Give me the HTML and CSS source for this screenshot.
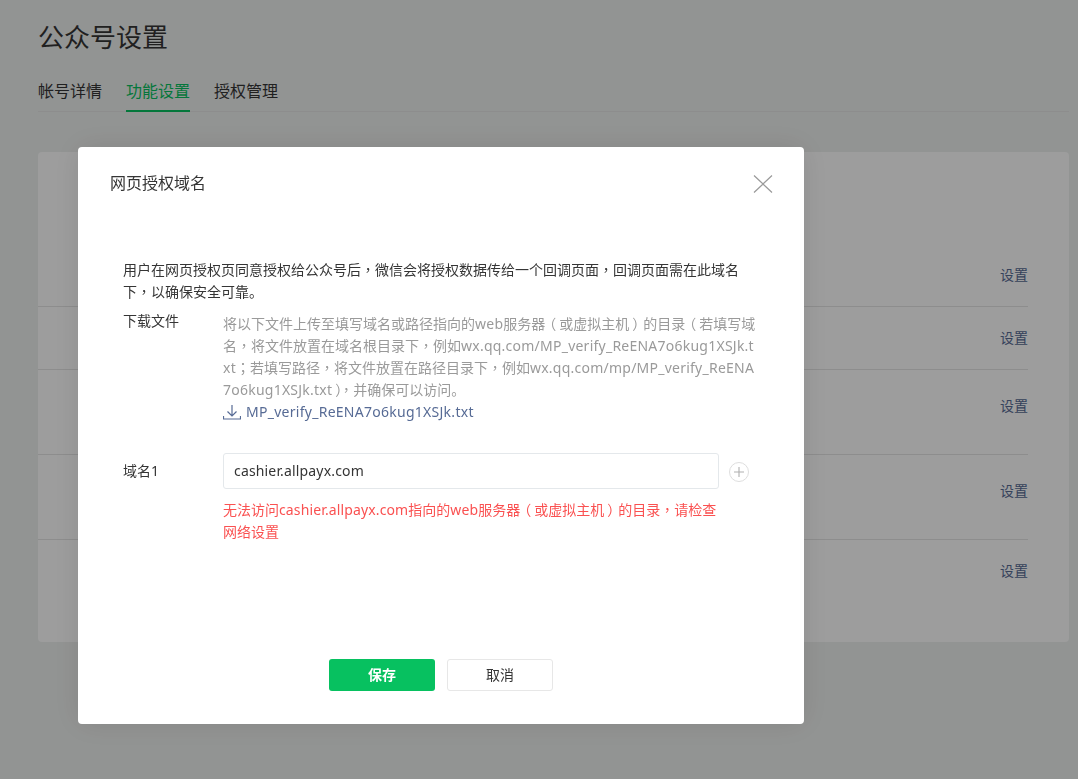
FILE: index.html
```html
<!DOCTYPE html>
<html lang="zh-CN">
<head>
<meta charset="utf-8">
<title>公众号设置</title>
<link rel="stylesheet" href="styles.css">
</head>
<body>
<main class="page">
  <h1 class="page-title">公众号设置</h1>
  <nav class="tabs">
    <a class="tab">帐号详情</a>
    <a class="tab tab-active">功能设置</a>
    <a class="tab">授权管理</a>
  </nav>
  <section class="card">
    <div class="row row-1"><a class="row-link">设置</a></div>
    <div class="row row-2"><a class="row-link">设置</a></div>
    <div class="row row-3"><a class="row-link">设置</a></div>
    <div class="row row-4"><a class="row-link">设置</a></div>
    <div class="row row-5"><a class="row-link">设置</a></div>
  </section>
</main>
<div class="overlay">
  <div class="dialog">
    <header class="dialog-head">
      <h2 class="dialog-title">网页授权域名</h2>
      <svg class="close" width="20" height="20" viewBox="0 0 20 20" fill="none" stroke="#9a9a9a" stroke-width="1.2"><path d="M1 1.5 19 18.5M19 1.5 1 18.5"/></svg>
    </header>
    <div class="dialog-body">
      <p class="intro">用户在网页授权页同意授权给公众号后<span class="p" lang="zh-TW">，</span>微信会将授权数据传给一个回调页面<span class="p" lang="zh-TW">，</span>回调页面需在此域名<br>下<span class="p" lang="zh-TW">，</span>以确保安全可靠。</p>
      <div class="field field-file">
        <div class="label">下载文件</div>
        <div class="value">
          <p class="hint">将以下文件上传至填写域名或路径指向的<span class="en">web</span>服务<span class="tight">器</span><span class="p po" lang="zh-TW">（</span>或虚拟主机<span class="p pc" lang="zh-TW">）</span>的目<span class="tight">录</span><span class="p po" lang="zh-TW">（</span>若填写域<br>名<span class="p" lang="zh-TW">，</span>将文件放置在域名根目录下<span class="p" lang="zh-TW">，</span>例如<span class="en">wx.qq.com/MP_verify_ReENA7o6kug1XSJk.t</span><br><span class="en">xt</span><span class="p" lang="zh-TW">；</span>若填写路径<span class="p" lang="zh-TW">，</span>将文件放置在路径目录下<span class="p" lang="zh-TW">，</span>例如<span class="en">wx.qq.com/mp/MP_verify_ReENA</span><br><span class="en">7o6kug1XSJk.txt</span><span class="p pc" lang="zh-TW">）</span><span class="p" lang="zh-TW">，</span>并确保可以访问。</p>
          <a class="download">
            <svg width="18" height="16" viewBox="0 0 18 16" fill="none" stroke="#576b95" stroke-width="1.2"><path d="M9 1v10.5M4.5 7.5 9 12l4.500-4.500M.5 12v3h17v-3"/></svg>
            <span class="en en-link">MP_verify_ReENA7o6kug1XSJk.txt</span>
          </a>
        </div>
      </div>
      <div class="field field-domain">
        <div class="label label-domain">域名1</div>
        <div class="value">
          <div class="input-line">
            <div class="input">cashier.allpayx.com</div>
            <svg class="plus" width="20" height="20" viewBox="0 0 20 20" fill="none"><circle cx="10" cy="10" r="9.500" stroke="#dedede"/><path d="M10 5v10M5 10h10" stroke="#b0b0b0" stroke-width="1.100"/></svg>
          </div>
          <p class="error">无法访问<span class="en en-error">cashier.allpayx.com</span>指向的<span class="en en-error">web</span>服务<span class="tight">器</span><span class="p po" lang="zh-TW">（</span>或虚拟主机<span class="p pc" lang="zh-TW">）</span>的目录<span class="p" lang="zh-TW">，</span>请检查<br>网络设置</p>
        </div>
      </div>
    </div>
    <footer class="dialog-foot">
      <button class="btn btn-primary">保存</button>
      <button class="btn btn-default">取消</button>
    </footer>
  </div>
</div>
</body>
</html>
```
FILE: styles.css
```css
* { box-sizing: border-box; }
html, body { margin: 0; height: 100%; overflow: hidden; }
body {
  background: #eef0ef;
  color: #353535;
  font-family: "Noto Sans", "Noto Sans CJK SC", sans-serif;
  font-size: 14px;
}
.p { font-family: "Noto Sans CJK TC", sans-serif; line-height: 1; }
.tight { letter-spacing: -3px; }
.po { margin-right: 3px; }
.pc { margin-left: 3px; letter-spacing: -3px; }
.en { letter-spacing: .24px; }
.en-link { letter-spacing: .27px; }
.en-error { letter-spacing: .13px; }
.page { padding: 0 9px 0 38px; }
.page-title {
  margin: 0;
  padding-top: 18px;
  font-size: 26px;
  line-height: 38px;
  font-weight: 400;
}
.tabs {
  display: flex;
  gap: 24px;
  margin-top: 16px;
  border-bottom: 1px solid #e5e5e5;
  height: 40px;
}
.tab {
  font-size: 16px;
  line-height: 36px;
  height: 40px;
  padding-top: 1px;
  border-bottom: 2px solid transparent;
}
.tab-active { color: #07c160; border-bottom-color: #07c160; }
.card {
  margin-top: 40px;
  height: 490px;
  background: #fff;
  border-radius: 4px;
  padding: 0 41px 0 0;
}
.row {
  display: flex;
  justify-content: flex-end;
  align-items: center;
  border-bottom: 1px solid #e5e5e5;
  padding-bottom: 2px;
}
.row:last-child { border-bottom: 0; }
.row-1 { height: 155px; padding-top: 92px; }
.row-2 { height: 63px; }
.row-3 { height: 85px; padding-bottom: 14px; }
.row-4 { height: 85px; padding-bottom: 14px; }
.row-5 { height: 62px; }
.row-link { color: #576b95; font-size: 14px; }
.overlay {
  position: fixed;
  inset: 0;
  background: rgba(0, 0, 0, .385);
}
.dialog {
  position: absolute;
  left: 78px;
  top: 147px;
  width: 726px;
  height: 577px;
  background: #fff;
  border-radius: 4px;
  box-shadow: 0 0 30px rgba(0, 0, 0, .1);
  display: flex;
  flex-direction: column;
}
.dialog-head {
  display: flex;
  justify-content: space-between;
  align-items: flex-start;
  padding: 27px 31px 0 32px;
}
.dialog-title {
  margin: 0;
  font-size: 16px;
  line-height: 18px;
  font-weight: 400;
}
.close { display: block; }
.dialog-body { padding: 65px 45px 0; flex: 1; }
.intro {
  margin: 0;
  line-height: 22px;
  white-space: nowrap;
}
.field { display: flex; }
.field-file { margin-top: 7px; }
.field-domain { margin-top: 30px; }
.label { width: 100px; line-height: 22px; flex: none; }
.label-domain { line-height: 36px; }
.value { flex: 1; min-width: 0; }
.hint {
  margin: 3px 0 0;
  color: #9a9a9a;
  line-height: 22px;
  white-space: nowrap;
}
.download {
  display: flex;
  align-items: center;
  gap: 5px;
  color: #576b95;
  line-height: 22px;
}
.input-line { display: flex; align-items: center; gap: 10px; }
.input {
  width: 496px;
  height: 36px;
  border: 1px solid #e4e8eb;
  border-radius: 3px;
  padding: 0 10px;
  line-height: 34px;
  letter-spacing: .16px;
  color: #353535;
}
.plus { display: block; margin-top: 2px; }
.error {
  margin: 10px 0 0;
  color: #fa5151;
  line-height: 22px;
  white-space: nowrap;
}
.dialog-foot {
  display: flex;
  justify-content: center;
  gap: 12px;
  padding-bottom: 33px;
}
.btn {
  width: 106px;
  height: 32px;
  border-radius: 3px;
  font: inherit;
  padding: 0 0 2px;
}
.btn-primary {
  background: #07c160;
  border: 0;
  color: #fff;
  font-weight: 700;
}
.btn-default {
  background: #fff;
  border: 1px solid #e7e7e7;
  color: #353535;
}
```
